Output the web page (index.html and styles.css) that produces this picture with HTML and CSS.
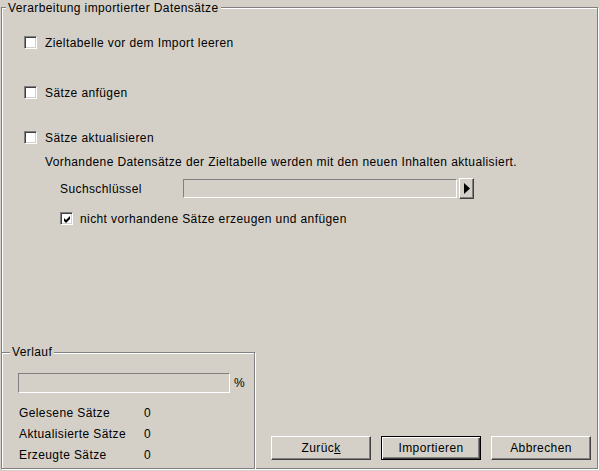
FILE: index.html
```html
<!DOCTYPE html>
<html lang="de">
<head>
  <meta charset="UTF-8" />
  <title>Import</title>
  <link rel="stylesheet" href="styles.css">
</head>
<body>
  <div class="group main-group">
    <span class="group-title">Verarbeitung importierter Datensätze</span>

    <div class="options">
      <label class="option opt-clear"><span class="checkbox"></span>Zieltabelle vor dem Import leeren</label>
      <label class="option opt-append"><span class="checkbox"></span>Sätze anfügen</label>
      <label class="option opt-update"><span class="checkbox"></span>Sätze aktualisieren</label>
      <p class="note">Vorhandene Datensätze der Zieltabelle werden mit den neuen Inhalten aktualisiert.</p>
      <div class="key-row">
        <span class="key-label">Suchschlüssel</span>
        <span class="key-field"></span>
        <span class="key-button">
          <svg width="6" height="11" viewBox="0 0 6 11"><polygon points="0,0 6,5.5 0,11" fill="#000"/></svg>
        </span>
      </div>
      <label class="option opt-create">
        <span class="checkbox">
          <svg width="9" height="9" viewBox="0 0 9 9"><polygon points="1,3 3,5 7,1 7,4 3,8 1,6" fill="#000"/></svg>
        </span>nicht vorhandene Sätze erzeugen und anfügen</label>
    </div>

    <div class="bottom">
      <div class="group progress-group">
        <span class="group-title">Verlauf</span>
        <div class="progress-row">
          <div class="progress-bar"></div>
          <span>%</span>
        </div>
        <div class="stats">
          <span>Gelesene Sätze</span><span>0</span>
          <span>Aktualisierte Sätze</span><span>0</span>
          <span>Erzeugte Sätze</span><span>0</span>
        </div>
      </div>
      <div class="buttons">
        <button>Zurüc<u>k</u></button>
        <button class="default">Importieren</button>
        <button>Abbrechen</button>
      </div>
    </div>
  </div>
</body>
</html>
```

FILE: styles.css
```css
:root {
  --face: #d4d0c8;
  --shadow: #808080;
  --dark: #404040;
  --light: #fff;
}
* {
  margin: 0;
  padding: 0;
  box-sizing: border-box;
}
html, body {
  width: 600px;
  height: 471px;
  overflow: hidden;
  background: var(--face);
  color: #000;
  font-family: "Liberation Sans", Arial, sans-serif;
  font-size: 12px;
  line-height: 14px;
  letter-spacing: 0.4px;
}

/* etched group boxes */
.group {
  position: relative;
  border: 1px solid var(--shadow);
  box-shadow: inset 1px 1px 0 var(--light), 1px 1px 0 var(--light);
}
.group-title {
  position: absolute;
  top: -7px;
  left: 4px;
  padding: 0 2px;
  background: var(--face);
  white-space: nowrap;
}
.main-group {
  margin: 7px 0 0 1px;
  width: 597px;
  height: 462px;
  display: flex;
  flex-direction: column;
}

.options {
  padding-left: 22px;
}
.option {
  display: flex;
  align-items: center;
  gap: 8px;
  height: 13px;
}
.opt-clear { margin-top: 28px; }
.opt-append { margin-top: 37px; }
.opt-update { margin-top: 32px; }
.opt-create {
  margin: 13px 0 0 36px;
  gap: 7px;
}

.checkbox {
  width: 13px;
  height: 13px;
  flex: none;
  display: flex;
  align-items: center;
  justify-content: center;
  background: var(--light);
  border: 1px solid;
  border-color: var(--shadow) var(--light) var(--light) var(--shadow);
  box-shadow: inset 1px 1px 0 var(--dark), inset -1px -1px 0 var(--face);
}
.checkbox svg {
  margin: 1px 0 0 1px;
}

.note {
  margin: 11px 0 0 21px;
}

.key-row {
  display: flex;
  align-items: center;
  height: 21px;
  margin: 9px 0 0 36px;
}
.key-label {
  width: 123px;
}
.key-field {
  width: 274px;
  height: 19px;
  margin-right: 2px;
  border: 1px solid;
  border-color: var(--shadow) var(--light) var(--light) var(--shadow);
}
.key-button {
  width: 15px;
  height: 21px;
  display: flex;
  align-items: center;
  justify-content: center;
  border: 1px solid;
  border-color: var(--light) var(--dark) var(--dark) var(--light);
  box-shadow: inset -1px -1px 0 var(--shadow);
}

.bottom {
  margin-top: auto;
  display: flex;
  align-items: flex-end;
}
.progress-group {
  width: 254px;
  height: 117px;
  margin: 0 0 -1px -1px;
  padding: 20px 0 0 16px;
}
.progress-group .group-title {
  top: -8px;
  left: 8px;
}
.progress-row {
  display: flex;
  align-items: center;
  gap: 4px;
}
.progress-bar {
  width: 212px;
  height: 20px;
  border: 1px solid;
  border-color: var(--shadow) var(--light) var(--light) var(--shadow);
}
.stats {
  display: grid;
  grid-template-columns: 125px auto;
  line-height: 21px;
  margin-top: 10px;
  padding-left: 1px;
}

.buttons {
  margin-left: auto;
  padding: 0 6px 8px 0;
  display: flex;
  gap: 10px;
}
button {
  width: 100px;
  height: 24px;
  background: var(--face);
  font: inherit;
  letter-spacing: inherit;
  color: #000;
  border: 1px solid;
  border-color: var(--light) var(--dark) var(--dark) var(--light);
  box-shadow: inset -1px -1px 0 var(--shadow);
}
button.default {
  border-color: #000;
  box-shadow: inset 1px 1px 0 var(--light), inset -1px -1px 0 var(--dark), inset -2px -2px 0 var(--shadow);
}
```
